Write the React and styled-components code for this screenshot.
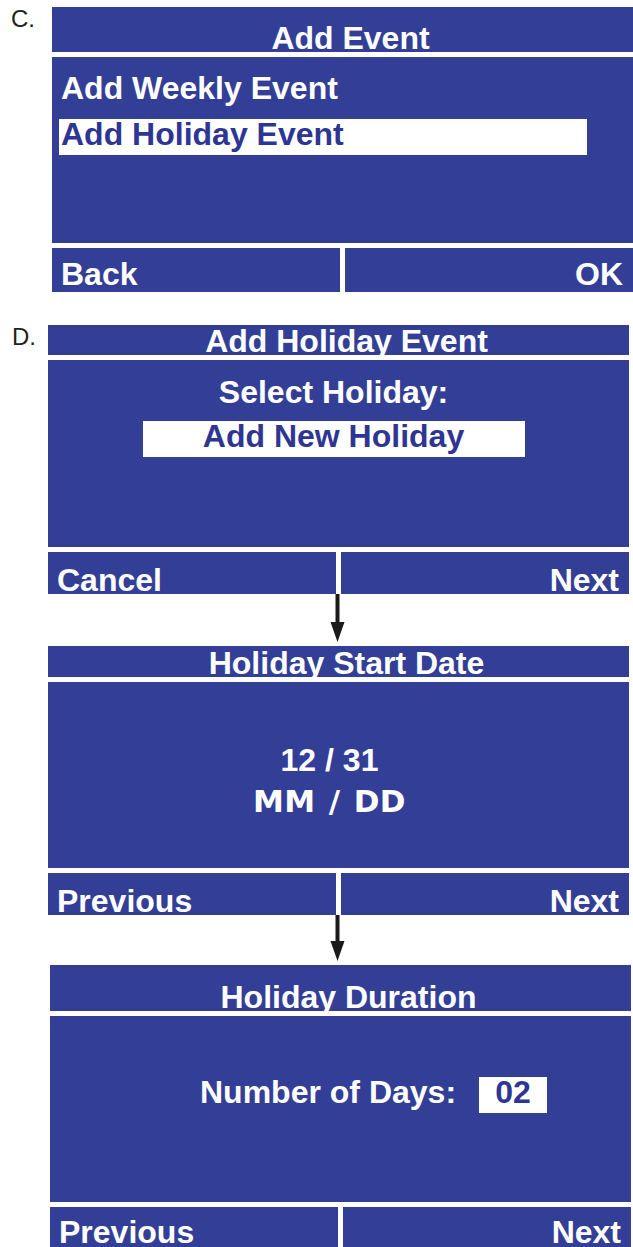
import React from 'react';
import styled, { createGlobalStyle } from 'styled-components';

const BLUE = '#333e97';

const Global = createGlobalStyle`
  body {
    margin: 0;
    background: #fff;
    font-family: "Liberation Sans", Arial, sans-serif;
  }
`;

const Page = styled.main`
  display: flex;
  flex-direction: column;
  gap: 33px;
  padding-top: 7px;
  width: 633px;
  overflow: hidden;
`;

const Section = styled.div`
  display: flex;
  align-items: flex-start;
`;

const Label = styled.div`
  width: ${p => p.$w}px;
  flex: none;
  box-sizing: border-box;
  padding-left: ${p => p.$pad}px;
  font-size: 24px;
  line-height: 24px;
  color: #231f20;
`;

const Column = styled.div`
  display: flex;
  flex-direction: column;
`;

const Screen = styled.section`
  display: flex;
  flex-direction: column;
  gap: 5px;
  width: ${p => p.$w || 581}px;
  margin-left: ${p => p.$shift || 0}px;
  font-weight: bold;
  font-size: 32px;
  color: #fff;
`;

const Title = styled.header`
  height: ${p => p.$h}px;
  background: ${BLUE};
  display: flex;
  align-items: flex-end;
  justify-content: center;
  padding-left: 16px;
  overflow: hidden;

  span {
    line-height: 32px;
    margin-bottom: -2px;
  }
`;

const Body = styled.div`
  height: ${p => p.$h}px;
  background: ${BLUE};
  box-sizing: border-box;
  padding-top: ${p => p.$top || 0}px;
  display: flex;
  flex-direction: column;
  align-items: ${p => p.$align || 'center'};
  padding-right: ${p => p.$right || 0}px;
  padding-left: ${p => p.$left || 0}px;
`;

const Footer = styled.footer`
  height: ${p => p.$h}px;
  display: grid;
  grid-template-columns: 288px 1fr;
  gap: 5px;
`;

const SoftKey = styled.div`
  background: ${BLUE};
  overflow: hidden;
  box-sizing: border-box;
  padding: ${p => p.$top}px 10px 0 9px;
  line-height: 32px;
  text-align: ${p => (p.$right ? 'right' : 'left')};
`;

const MenuList = styled.div`
  display: flex;
  flex-direction: column;
  gap: 10px;
  margin-left: 6.5px;
`;

const MenuItem = styled.div`
  width: 528px;
  height: 36px;
  box-sizing: border-box;
  padding-left: 2.5px;
  line-height: 30px;
  background: ${p => (p.$selected ? '#fff' : 'transparent')};
  color: ${p => (p.$selected ? '#2e3592' : '#fff')};
`;

const Line = styled.div`
  line-height: 36px;
  height: 36px;
  white-space: nowrap;
`;

const WideLine = styled.div`
  font-family: "DejaVu Sans", Verdana, sans-serif;
  font-size: 31px;
  letter-spacing: 0.4px;
  word-spacing: 2px;
  line-height: 36px;
  margin-top: 5px;
`;

const Field = styled.div`
  background: #fff;
  color: #2e3592;
  width: ${p => p.$w}px;
  height: 36px;
  box-sizing: border-box;
  line-height: 30px;
  text-align: center;
  margin-top: ${p => p.$mt || 0}px;
  flex: none;
`;

const Row = styled.div`
  display: flex;
  align-items: flex-start;
  gap: 23px;
`;

const ArrowRow = styled.div`
  height: ${p => p.$h}px;
  padding-left: 282px;
`;

const DownArrow = ({ h }) => (
  <ArrowRow $h={h}>
    <svg width="15" height={h} viewBox={`0 0 15 ${h}`}>
      <rect x="5.5" y="0" width="4" height={h - 20} fill="#1a1a1a" />
      <polygon points={`0.5,${h - 24} 14.5,${h - 24} 7.5,${h - 4}`} fill="#1a1a1a" />
    </svg>
  </ArrowRow>
);

const Keys = ({ h, top, left, right }) => (
  <Footer $h={h}>
    <SoftKey $top={top}>{left}</SoftKey>
    <SoftKey $top={top} $right>{right}</SoftKey>
  </Footer>
);

export default function App() {
  return (
    <>
      <Global />
      <Page>
        <Section>
          <Label $w={52} $pad={11}>C.</Label>
          <Screen>
            <Title $h={45}><span>Add Event</span></Title>
            <Body $h={186} $top={16} $align="flex-start">
              <MenuList>
                <MenuItem>Add Weekly Event</MenuItem>
                <MenuItem $selected>Add Holiday Event</MenuItem>
              </MenuList>
            </Body>
            <Keys h={44} top={9.9} left="Back" right="OK" />
          </Screen>
        </Section>

        <Section>
          <Label $w={48} $pad={12}>D.</Label>
          <Column>
            <Screen>
              <Title $h={30}><span>Add Holiday Event</span></Title>
              <Body $h={187} $top={14} $right={10}>
                <Line>Select Holiday:</Line>
                <Field $w={382} $mt={11}>Add New Holiday</Field>
              </Body>
              <Keys h={42} top={11.6} left="Cancel" right="Next" />
            </Screen>

            <DownArrow h={52} />

            <Screen>
              <Title $h={31}><span>Holiday Start Date</span></Title>
              <Body $h={186} $top={60} $right={18}>
                <Line>12 / 31</Line>
                <WideLine>MM / DD</WideLine>
              </Body>
              <Keys h={42} top={11.6} left="Previous" right="Next" />
            </Screen>

            <DownArrow h={50} />

            <Screen $shift={2}>
              <Title $h={46}><span>Holiday Duration</span></Title>
              <Body $h={186} $top={58} $align="flex-start" $left={150}>
                <Row>
                  <Line>Number of Days:</Line>
                  <Field $w={68} $mt={3}>02</Field>
                </Row>
              </Body>
              <Keys h={44} top={8.9} left="Previous" right="Next" />
            </Screen>
          </Column>
        </Section>
      </Page>
    </>
  );
}
